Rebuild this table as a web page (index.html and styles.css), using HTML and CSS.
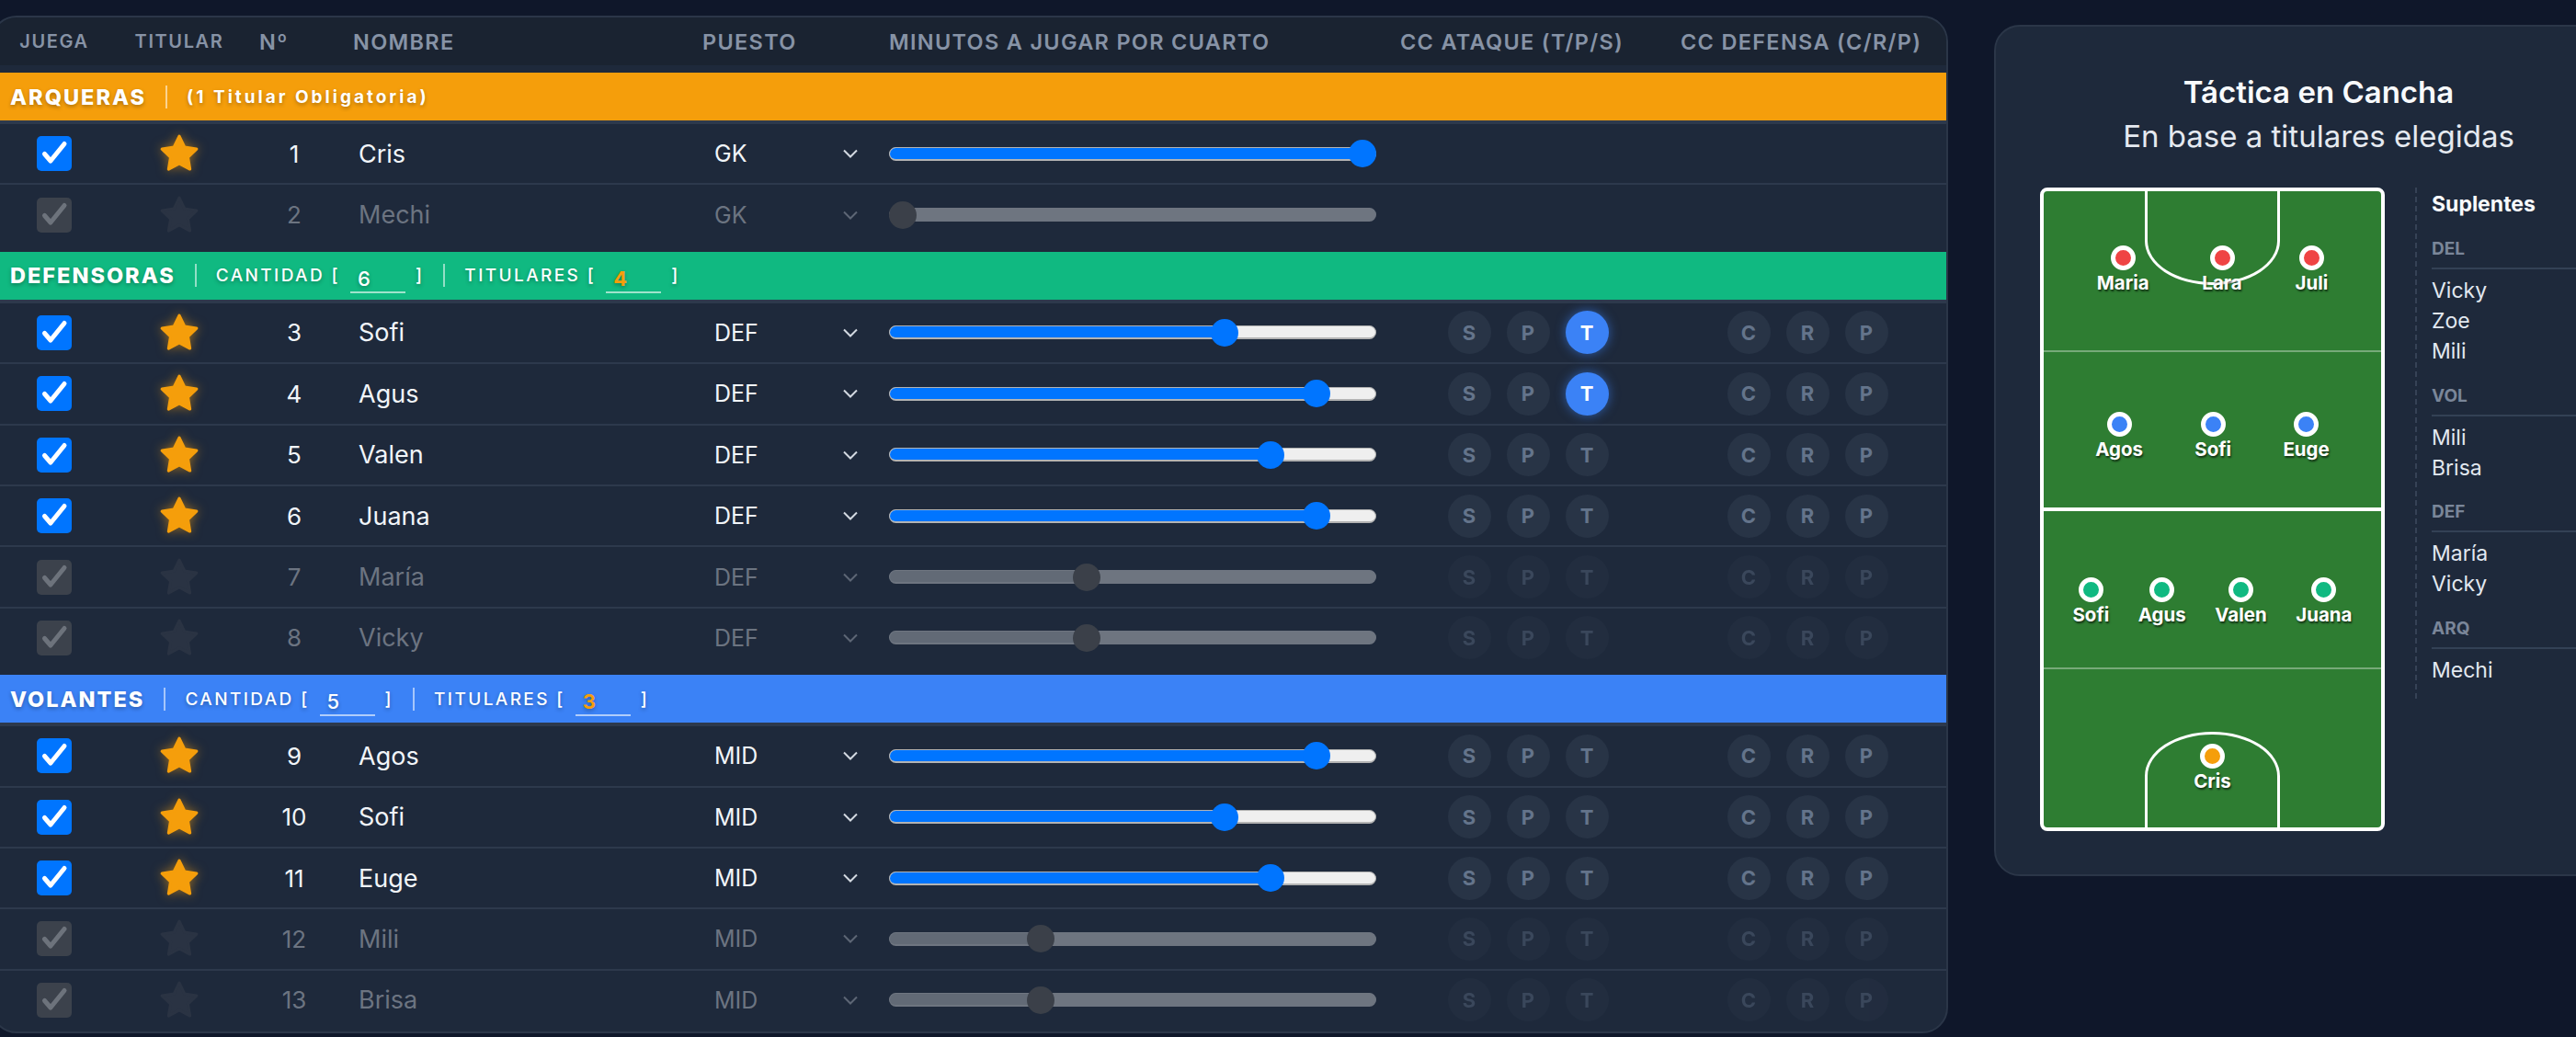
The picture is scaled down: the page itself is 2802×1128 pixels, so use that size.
FILE: index.html
```html
<!DOCTYPE html>
<html lang="es">
<head>
<meta charset="utf-8">
<title>Plantel</title>
<link rel="stylesheet" href="styles.css">
</head>
<body>
<svg width="0" height="0" class="defs" aria-hidden="true">
  <defs>
    <symbol id="star" viewBox="0 0 24 24"><path d="M12 2.6 L14.9 8.6 L21.4 9.5 L16.7 14 L17.8 20.5 L12 17.4 L6.2 20.5 L7.3 14 L2.6 9.5 L9.1 8.6 Z"/></symbol>
    <symbol id="check" viewBox="0 0 38 38"><path d="M8.5 19.5 L15 27 L30 8.5"/></symbol>
    <symbol id="chev" viewBox="0 0 16 10"><path d="M1 1.5 L8 8.5 L15 1.5"/></symbol>
  </defs>
</svg>
<div class="page">
  <section class="roster">
    <div class="grid thead">
      <div class="th sm center">Juega</div>
      <div class="th sm center">Titular</div>
      <div class="th th-num">Nº</div>
      <div class="th th-name">Nombre</div>
      <div class="th">Puesto</div>
      <div class="th">Minutos a jugar por cuarto</div>
      <div class="th">CC Ataque (T/P/S)</div>
      <div class="th th-def">CC Defensa (C/R/P)</div>
    </div>

    <div class="group">
      <div class="band band-arq first">
        <span class="band-title">ARQUERAS</span><span class="pipe"></span><span class="band-note">(1 Titular Obligatoria)</span>
      </div>
      <div class="grid row">
        <div class="c-center"><span class="cb"><svg><use href="#check"/></svg></span></div>
        <div class="c-center"><svg class="star"><use href="#star"/></svg></div>
        <div class="num">1</div>
        <div class="name">Cris</div>
        <div class="sel"><span>GK</span><svg class="chev"><use href="#chev"/></svg></div>
        <div><div class="slider" style="--v:1"><div class="track"><div class="fill"></div></div><div class="thumb"></div></div></div>
        <div></div>
        <div></div>
      </div>
      <div class="grid row off">
        <div class="c-center"><span class="cb"><svg><use href="#check"/></svg></span></div>
        <div class="c-center"><svg class="star"><use href="#star"/></svg></div>
        <div class="num">2</div>
        <div class="name">Mechi</div>
        <div class="sel"><span>GK</span><svg class="chev"><use href="#chev"/></svg></div>
        <div><div class="slider" style="--v:0"><div class="track"><div class="fill"></div></div><div class="thumb"></div></div></div>
        <div></div>
        <div></div>
      </div>
    </div>

    <div class="group">
      <div class="band band-def">
        <span class="band-title">DEFENSORAS</span><span class="pipe"></span>
        <span class="band-label">CANTIDAD [</span><span class="band-input">6</span><span class="band-label">]</span><span class="pipe"></span>
        <span class="band-label">TITULARES [</span><span class="band-input hi">4</span><span class="band-label">]</span>
      </div>
      <div class="grid row">
        <div class="c-center"><span class="cb"><svg><use href="#check"/></svg></span></div>
        <div class="c-center"><svg class="star"><use href="#star"/></svg></div>
        <div class="num">3</div>
        <div class="name">Sofi</div>
        <div class="sel"><span>DEF</span><svg class="chev"><use href="#chev"/></svg></div>
        <div><div class="slider" style="--v:0.7"><div class="track"><div class="fill"></div></div><div class="thumb"></div></div></div>
        <div class="cc"><span>S</span><span>P</span><span class="on">T</span></div>
        <div class="cc def"><span>C</span><span>R</span><span>P</span></div>
      </div>
      <div class="grid row">
        <div class="c-center"><span class="cb"><svg><use href="#check"/></svg></span></div>
        <div class="c-center"><svg class="star"><use href="#star"/></svg></div>
        <div class="num">4</div>
        <div class="name">Agus</div>
        <div class="sel"><span>DEF</span><svg class="chev"><use href="#chev"/></svg></div>
        <div><div class="slider" style="--v:0.9"><div class="track"><div class="fill"></div></div><div class="thumb"></div></div></div>
        <div class="cc"><span>S</span><span>P</span><span class="on">T</span></div>
        <div class="cc def"><span>C</span><span>R</span><span>P</span></div>
      </div>
      <div class="grid row">
        <div class="c-center"><span class="cb"><svg><use href="#check"/></svg></span></div>
        <div class="c-center"><svg class="star"><use href="#star"/></svg></div>
        <div class="num">5</div>
        <div class="name">Valen</div>
        <div class="sel"><span>DEF</span><svg class="chev"><use href="#chev"/></svg></div>
        <div><div class="slider" style="--v:0.8"><div class="track"><div class="fill"></div></div><div class="thumb"></div></div></div>
        <div class="cc"><span>S</span><span>P</span><span>T</span></div>
        <div class="cc def"><span>C</span><span>R</span><span>P</span></div>
      </div>
      <div class="grid row">
        <div class="c-center"><span class="cb"><svg><use href="#check"/></svg></span></div>
        <div class="c-center"><svg class="star"><use href="#star"/></svg></div>
        <div class="num">6</div>
        <div class="name">Juana</div>
        <div class="sel"><span>DEF</span><svg class="chev"><use href="#chev"/></svg></div>
        <div><div class="slider" style="--v:0.9"><div class="track"><div class="fill"></div></div><div class="thumb"></div></div></div>
        <div class="cc"><span>S</span><span>P</span><span>T</span></div>
        <div class="cc def"><span>C</span><span>R</span><span>P</span></div>
      </div>
      <div class="grid row off">
        <div class="c-center"><span class="cb"><svg><use href="#check"/></svg></span></div>
        <div class="c-center"><svg class="star"><use href="#star"/></svg></div>
        <div class="num">7</div>
        <div class="name">María</div>
        <div class="sel"><span>DEF</span><svg class="chev"><use href="#chev"/></svg></div>
        <div><div class="slider" style="--v:0.4"><div class="track"><div class="fill"></div></div><div class="thumb"></div></div></div>
        <div class="cc"><span>S</span><span>P</span><span>T</span></div>
        <div class="cc def"><span>C</span><span>R</span><span>P</span></div>
      </div>
      <div class="grid row off">
        <div class="c-center"><span class="cb"><svg><use href="#check"/></svg></span></div>
        <div class="c-center"><svg class="star"><use href="#star"/></svg></div>
        <div class="num">8</div>
        <div class="name">Vicky</div>
        <div class="sel"><span>DEF</span><svg class="chev"><use href="#chev"/></svg></div>
        <div><div class="slider" style="--v:0.4"><div class="track"><div class="fill"></div></div><div class="thumb"></div></div></div>
        <div class="cc"><span>S</span><span>P</span><span>T</span></div>
        <div class="cc def"><span>C</span><span>R</span><span>P</span></div>
      </div>
    </div>

    <div class="group">
      <div class="band band-vol">
        <span class="band-title">VOLANTES</span><span class="pipe"></span>
        <span class="band-label">CANTIDAD [</span><span class="band-input">5</span><span class="band-label">]</span><span class="pipe"></span>
        <span class="band-label">TITULARES [</span><span class="band-input hi">3</span><span class="band-label">]</span>
      </div>
      <div class="grid row">
        <div class="c-center"><span class="cb"><svg><use href="#check"/></svg></span></div>
        <div class="c-center"><svg class="star"><use href="#star"/></svg></div>
        <div class="num">9</div>
        <div class="name">Agos</div>
        <div class="sel"><span>MID</span><svg class="chev"><use href="#chev"/></svg></div>
        <div><div class="slider" style="--v:0.9"><div class="track"><div class="fill"></div></div><div class="thumb"></div></div></div>
        <div class="cc"><span>S</span><span>P</span><span>T</span></div>
        <div class="cc def"><span>C</span><span>R</span><span>P</span></div>
      </div>
      <div class="grid row">
        <div class="c-center"><span class="cb"><svg><use href="#check"/></svg></span></div>
        <div class="c-center"><svg class="star"><use href="#star"/></svg></div>
        <div class="num">10</div>
        <div class="name">Sofi</div>
        <div class="sel"><span>MID</span><svg class="chev"><use href="#chev"/></svg></div>
        <div><div class="slider" style="--v:0.7"><div class="track"><div class="fill"></div></div><div class="thumb"></div></div></div>
        <div class="cc"><span>S</span><span>P</span><span>T</span></div>
        <div class="cc def"><span>C</span><span>R</span><span>P</span></div>
      </div>
      <div class="grid row">
        <div class="c-center"><span class="cb"><svg><use href="#check"/></svg></span></div>
        <div class="c-center"><svg class="star"><use href="#star"/></svg></div>
        <div class="num">11</div>
        <div class="name">Euge</div>
        <div class="sel"><span>MID</span><svg class="chev"><use href="#chev"/></svg></div>
        <div><div class="slider" style="--v:0.8"><div class="track"><div class="fill"></div></div><div class="thumb"></div></div></div>
        <div class="cc"><span>S</span><span>P</span><span>T</span></div>
        <div class="cc def"><span>C</span><span>R</span><span>P</span></div>
      </div>
      <div class="grid row off">
        <div class="c-center"><span class="cb"><svg><use href="#check"/></svg></span></div>
        <div class="c-center"><svg class="star"><use href="#star"/></svg></div>
        <div class="num">12</div>
        <div class="name">Mili</div>
        <div class="sel"><span>MID</span><svg class="chev"><use href="#chev"/></svg></div>
        <div><div class="slider" style="--v:0.3"><div class="track"><div class="fill"></div></div><div class="thumb"></div></div></div>
        <div class="cc"><span>S</span><span>P</span><span>T</span></div>
        <div class="cc def"><span>C</span><span>R</span><span>P</span></div>
      </div>
      <div class="grid row off">
        <div class="c-center"><span class="cb"><svg><use href="#check"/></svg></span></div>
        <div class="c-center"><svg class="star"><use href="#star"/></svg></div>
        <div class="num">13</div>
        <div class="name">Brisa</div>
        <div class="sel"><span>MID</span><svg class="chev"><use href="#chev"/></svg></div>
        <div><div class="slider" style="--v:0.3"><div class="track"><div class="fill"></div></div><div class="thumb"></div></div></div>
        <div class="cc"><span>S</span><span>P</span><span>T</span></div>
        <div class="cc def"><span>C</span><span>R</span><span>P</span></div>
      </div>
    </div>
  </section>

  <section class="tactics">
    <h2 class="t-title">Táctica en Cancha</h2>
    <p class="t-sub">En base a titulares elegidas</p>
    <div class="t-body">
      <div class="field">
        <div class="area area-top"></div>
        <div class="q-line q1"></div>
        <div class="mid-line"></div>
        <div class="q-line q3"></div>
        <div class="area area-bottom"></div>

        <div class="line l-del">
          <div class="player"><span class="dot red"></span><span class="pname">Maria</span></div>
          <div class="player"><span class="dot red"></span><span class="pname">Lara</span></div>
          <div class="player"><span class="dot red"></span><span class="pname">Juli</span></div>
        </div>
        <div class="line l-vol">
          <div class="player"><span class="dot blue"></span><span class="pname">Agos</span></div>
          <div class="player"><span class="dot blue"></span><span class="pname">Sofi</span></div>
          <div class="player"><span class="dot blue"></span><span class="pname">Euge</span></div>
        </div>
        <div class="line l-def">
          <div class="player"><span class="dot green"></span><span class="pname">Sofi</span></div>
          <div class="player"><span class="dot green"></span><span class="pname">Agus</span></div>
          <div class="player"><span class="dot green"></span><span class="pname">Valen</span></div>
          <div class="player"><span class="dot green"></span><span class="pname">Juana</span></div>
        </div>
        <div class="line l-gk">
          <div class="player"><span class="dot amber"></span><span class="pname">Cris</span></div>
        </div>
      </div>

      <div class="subs">
        <div class="subs-title">Suplentes</div>
        <div class="subs-group">
          <div class="subs-h">DEL</div>
          <div class="subs-item">Vicky</div>
          <div class="subs-item">Zoe</div>
          <div class="subs-item">Mili</div>
        </div>
        <div class="subs-group">
          <div class="subs-h">VOL</div>
          <div class="subs-item">Mili</div>
          <div class="subs-item">Brisa</div>
        </div>
        <div class="subs-group">
          <div class="subs-h">DEF</div>
          <div class="subs-item">María</div>
          <div class="subs-item">Vicky</div>
        </div>
        <div class="subs-group">
          <div class="subs-h">ARQ</div>
          <div class="subs-item">Mechi</div>
        </div>
      </div>
    </div>
  </section>
</div>
</body>
</html>
```

FILE: styles.css
```css
* { box-sizing: border-box; }

html, body {
  margin: 0;
  padding: 0;
}

body {
  width: 2802px;
  height: 1128px;
  overflow: hidden;
  background: #0f172a;
  color: #f1f5f9;
  font-family: Inter, "Noto Sans", "Liberation Sans", sans-serif;
}

.defs {
  position: absolute;
  width: 0;
  height: 0;
}

.page {
  display: flex;
  align-items: flex-start;
  gap: 50px;
  width: max-content;
  margin-left: -10px;
  padding-top: 17px;
}

/* ---------- roster table ---------- */

.roster {
  flex: none;
  width: 2129px;
  background: #1e293b;
  border: 2px solid #2b3648;
  border-radius: 28px;
  overflow: hidden;
}

.grid {
  display: grid;
  grid-template-columns: 134px 138px 112px 388px 203px 556px 277px 317px;
  align-items: center;
}

.thead {
  height: 52px;
  background: #1a2331;
}

.th {
  font-size: 23.5px;
  font-weight: 600;
  letter-spacing: 1.3px;
  text-transform: uppercase;
  color: #8793a6;
  white-space: nowrap;
}

.th.sm {
  font-size: 20px;
  letter-spacing: 1.6px;
}

.th.center { text-align: center; }
.th-num { padding-left: 18px; }
.th-name { padding-left: 8px; }
.th-def { padding-left: 28px; }

/* category bands */

.band {
  height: 56px;
  margin-top: 6px;
  display: flex;
  align-items: center;
  padding-left: 19px;
  border-bottom: 4px solid #2d394c;
  color: #fff;
  text-shadow: 0 2px 4px rgba(0, 0, 0, 0.3);
  white-space: nowrap;
}

.band.first { margin-top: 8px; }
.band-arq { background: #f59e0b; }
.band-def { background: #10b981; }
.band-vol { background: #3b82f6; }

.band-title {
  font-size: 23.5px;
  font-weight: 800;
  letter-spacing: 2px;
}

.pipe {
  width: 2px;
  height: 25px;
  margin: 0 21px;
  background: rgba(255, 255, 255, 0.55);
}

.band-note {
  font-size: 19px;
  font-weight: 700;
  letter-spacing: 3px;
}

.band-label {
  font-size: 19px;
  font-weight: 500;
  letter-spacing: 2.4px;
}

.band-input {
  width: 60px;
  margin: 8px 11px 0;
  padding-left: 8px;
  font-size: 22px;
  font-weight: 500;
  line-height: 28px;
  border-bottom: 2px solid rgba(255, 255, 255, 0.6);
}

.band-input.hi {
  color: #f59e0b;
  font-weight: 700;
}

/* rows */

.row {
  height: 66.4px;
  border-bottom: 2px solid #2d394c;
}

.group .row:last-child { border-bottom-color: transparent; }

.c-center {
  display: flex;
  justify-content: center;
  align-items: center;
}

.cb {
  width: 38px;
  height: 38px;
  border-radius: 5px;
  background: #0075ff;
  display: flex;
}

.cb svg {
  width: 38px;
  height: 38px;
  fill: none;
  stroke: #fff;
  stroke-width: 5;
  stroke-linecap: round;
  stroke-linejoin: round;
}

.star {
  width: 48px;
  height: 48px;
  fill: #f59e0b;
  stroke: #f59e0b;
  stroke-width: 1.6;
  stroke-linejoin: round;
  filter: drop-shadow(0 0 6px rgba(245, 158, 11, 0.55));
}

.num {
  text-align: center;
  font-size: 26px;
  color: #f1f5f9;
}

.name {
  padding-left: 14px;
  font-size: 27px;
  color: #f1f5f9;
}

.sel {
  width: 163px;
  margin-left: 13px;
  padding-right: 7px;
  display: flex;
  justify-content: space-between;
  align-items: center;
  font-size: 25px;
  color: #f1f5f9;
}

.chev {
  width: 16px;
  height: 10px;
  fill: none;
  stroke: #d3d9e1;
  stroke-width: 2;
}

.slider {
  position: relative;
  width: 530px;
  height: 30px;
}

.track {
  position: absolute;
  left: 0;
  right: 0;
  top: 7.5px;
  height: 15px;
  border-radius: 8px;
  background: #efefef;
  border: 1px solid #b3b3b3;
  border-bottom-width: 2px;
  overflow: hidden;
}

.fill {
  height: 100%;
  width: calc(15px + var(--v) * 500px);
  background: #0075ff;
}

.thumb {
  position: absolute;
  top: 0;
  left: calc(var(--v) * 500px);
  width: 30px;
  height: 30px;
  border-radius: 50%;
  background: #0075ff;
}

.cc {
  display: flex;
  gap: 17px;
  padding-left: 51.5px;
}

.cc.def { padding-left: 78.5px; }

.cc span {
  width: 47px;
  height: 47px;
  border-radius: 50%;
  background: #283446;
  color: #64748b;
  font-size: 22px;
  font-weight: 700;
  display: flex;
  align-items: center;
  justify-content: center;
}

.cc span.on {
  background: #3b82f6;
  color: #fff;
  box-shadow: 0 0 12px rgba(59, 130, 246, 0.6);
}

/* inactive rows */

.off .cb { background: #3c424c; }
.off .cb svg { stroke: #6d737c; }
.off .star {
  fill: #2a3343;
  stroke: #2a3343;
  filter: none;
}
.off .num,
.off .name,
.off .sel { color: #6c7481; }
.off .chev { stroke: #5d6675; }
.off .track {
  background: #6e7580;
  border-color: #6e7580;
}
.off .fill { background: #626a76; }
.off .thumb { background: #3b4049; }
.off .cc { opacity: 0.4; }

/* ---------- tactics panel ---------- */

.tactics {
  flex: none;
  width: 706px;
  margin-top: 10px;
  padding: 47px 48px;
  background: #1e293b;
  border: 2px solid #2b3648;
  border-radius: 28px;
}

.t-title {
  margin: 0;
  text-align: center;
  font-size: 33px;
  font-weight: 600;
  line-height: 48px;
  color: #f8fafc;
}

.t-sub {
  margin: 0;
  text-align: center;
  font-size: 33px;
  font-weight: 400;
  line-height: 48px;
  color: #e5e9f0;
}

.t-body {
  display: flex;
  align-items: flex-start;
  margin-top: 32px;
}

.field {
  flex: none;
  position: relative;
  width: 375px;
  height: 700px;
  border: 4px solid #fff;
  border-radius: 8px;
  background: #2e7d32;
  overflow: hidden;
}

.area {
  position: absolute;
  left: 110px;
  width: 147px;
  border: 3px solid #fff;
}

.area-top {
  top: 0;
  height: 102px;
  border-top: none;
  border-radius: 0 0 73px 73px / 0 0 48px 48px;
}

.area-bottom {
  bottom: 0;
  height: 104px;
  border-bottom: none;
  border-radius: 73px 73px 0 0 / 48px 48px 0 0;
}

.q-line {
  position: absolute;
  left: 0;
  right: 0;
  height: 2px;
  background: rgba(255, 255, 255, 0.35);
}

.q1 { top: 173px; }
.q3 { top: 518px; }

.mid-line {
  position: absolute;
  left: 0;
  right: 0;
  top: 344px;
  height: 4px;
  background: #fff;
}

.line {
  position: absolute;
  left: 0;
  right: 0;
  display: flex;
  justify-content: space-evenly;
}

.l-del { top: 58.5px; }
.l-vol { top: 239.5px; }
.l-def { top: 419.5px; }
.l-gk { top: 600.5px; }

.player {
  display: flex;
  flex-direction: column;
  align-items: center;
}

.dot {
  width: 27px;
  height: 27px;
  border-radius: 50%;
  border: 5px solid #fff;
}

.dot.red { background: #ef4444; }
.dot.blue { background: #3b82f6; }
.dot.green { background: #10b981; }
.dot.amber { background: #f59e0b; }

.pname {
  margin-top: 2px;
  font-size: 20.5px;
  font-weight: 700;
  line-height: 24px;
  color: #fff;
  text-shadow: 1px 2px 2px rgba(0, 0, 0, 0.6);
}

.subs {
  flex: none;
  width: 198px;
  margin-left: 33px;
  padding: 0 0 14px 16px;
  border-left: 2px dashed #364256;
}

.subs-title {
  font-size: 23px;
  font-weight: 700;
  line-height: 36px;
  color: #f8fafc;
  margin-bottom: 17px;
}

.subs-group + .subs-group { margin-top: 17.5px; }

.subs-h {
  font-size: 19px;
  font-weight: 700;
  line-height: 28px;
  color: #7a8699;
  padding-bottom: 6px;
  border-bottom: 2px solid #334155;
  margin-bottom: 7px;
  margin-right: -60px;
}

.subs-item {
  font-size: 23px;
  line-height: 33px;
  color: #e2e8f0;
}
```
